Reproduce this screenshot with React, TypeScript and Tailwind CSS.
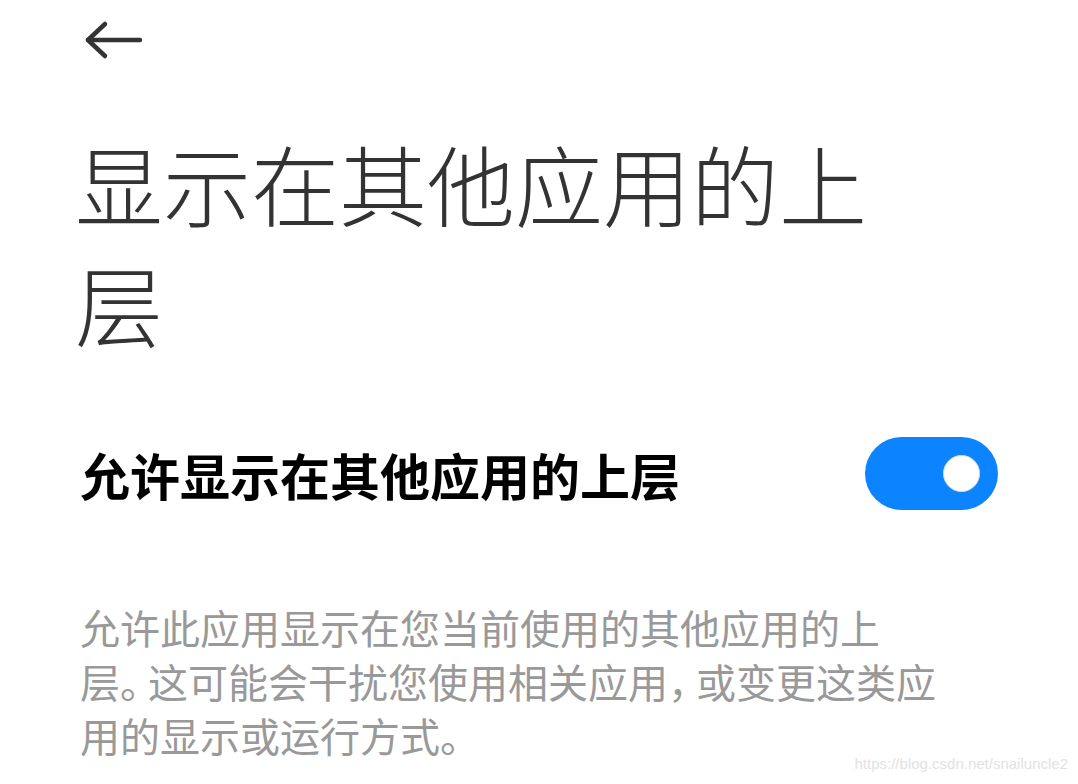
import React from "react"

const cjk = "font-['Noto_Sans_CJK_SC','Noto_Sans',sans-serif]"

function BackArrow() {
  return (
    <svg width="60" height="40" viewBox="0 0 60 40" fill="none" stroke="#333333" strokeWidth="4.5" strokeLinecap="round" strokeLinejoin="round">
      <path d="M56 20H4" />
      <path d="M21 4L4 20L21 36" />
    </svg>
  )
}

function Toggle({ on }: { on: boolean }) {
  return (
    <div className={`w-[133px] h-[73px] rounded-full flex items-center ${on ? "bg-[#0d84ff] justify-end" : "bg-gray-300 justify-start"} px-[18px]`}>
      <div className="w-[37px] h-[37px] rounded-full bg-white border border-[#dcdcdc]" />
    </div>
  )
}

// punctuation is set a little narrower than a full cell
function P({ c }: { c: string }) {
  return <span className="mr-[8px]">{c}</span>
}

export default function App() {
  return (
    <div className={`relative w-[1078px] h-[784px] bg-white overflow-hidden ${cjk}`}>
      <header className="h-[80px] flex items-center pl-[84px]">
        <BackArrow />
      </header>

      <h1 className="mt-[42px] pl-[75px] w-[880px] text-[88px] leading-[120px] font-light text-[#333333]">
        显示在其他应用的上层
      </h1>

      <div className="mt-[75px] pl-[80px] pr-[80px] flex items-center justify-between">
        <span className="text-[50px] leading-[72px] font-bold text-black">允许显示在其他应用的上层</span>
        <Toggle on />
      </div>

      <p className="mt-[90px] pl-[80px] w-[1000px] text-[40px] leading-[54px] text-[#999999] [font-feature-settings:'halt']">
        允许此应用显示在您当前使用的其他应用的上
        <br />
        层<P c="。" />这可能会干扰您使用相关应用<P c="，" />或变更这类应
        <br />
        用的显示或运行方式。
      </p>

      <span className="absolute right-[10px] bottom-[9px] text-[15px] text-[#e2e2e2] font-['Liberation_Sans',Arial,sans-serif]">
        https://blog.csdn.net/snailuncle2
      </span>
    </div>
  )
}
